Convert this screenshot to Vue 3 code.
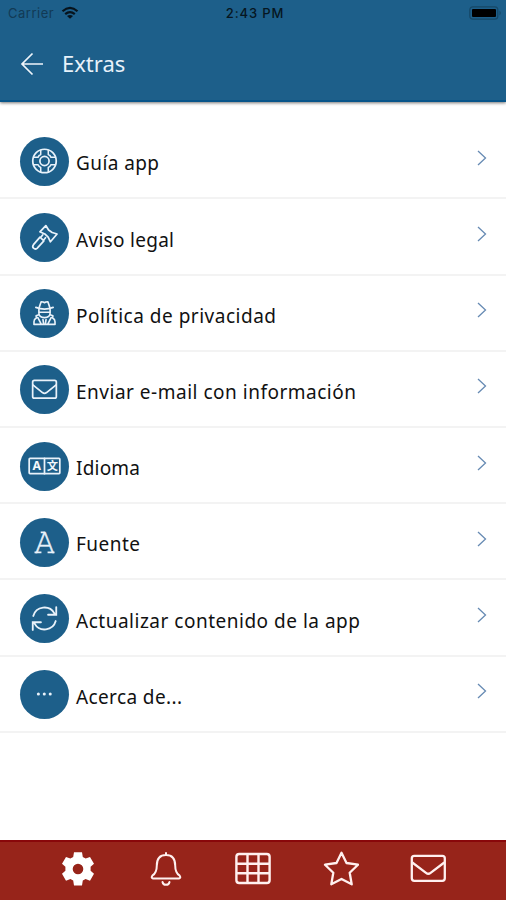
<script setup>
const rows = [
  { icon: 'guide', label: 'Guía app', width: 83 },
  { icon: 'gavel', label: 'Aviso legal', width: 98 },
  { icon: 'privacy', label: 'Política de privacidad', width: 200 },
  { icon: 'mail', label: 'Enviar e-mail con información', width: 280 },
  { icon: 'language', label: 'Idioma', width: 64 },
  { icon: 'font', label: 'Fuente', width: 64 },
  { icon: 'sync', label: 'Actualizar contenido de la app', width: 284 },
  { icon: 'more', label: 'Acerca de...', width: 106 },
]
</script>

<template>
  <div class="screen">
    <header class="header">
      <div class="status">
        <div class="carrier">
          <span>Carrier</span>
          <svg width="18" height="14" viewBox="0 0 18 14" fill="none" stroke="#07131c" stroke-width="2.200">
            <path d="M1.500 5.200Q9-1.600 16.500 5.200M4.200 8.200Q9 4 13.800 8.200" />
            <path d="M9 12.800 6 10Q9 7.800 12 10Z" fill="#07131c" stroke="none" />
          </svg>
        </div>
        <div class="time">2:43 PM</div>
        <div class="battery-wrap">
          <svg width="33" height="14" viewBox="0 0 33 14">
            <rect x=".8" y=".8" width="28" height="12.400" rx="3" fill="none" stroke="#164866" stroke-width="1.200" />
            <rect x="3" y="3" width="24" height="8" rx="1" fill="#000" />
            <path d="M30.500 4.500Q33 7 30.500 9.500Z" fill="#164866" />
          </svg>
        </div>
      </div>
      <div class="titlebar">
        <svg class="back" width="24" height="24" viewBox="0 0 24 24" fill="none" stroke="#eef5fb" stroke-width="1.700">
          <path d="M12.500 1.500 2 12l10.500 10.500M2 12H23" />
        </svg>
        <h1>Extras</h1>
      </div>
    </header>

    <main class="list">
      <div v-for="row in rows" :key="row.icon" class="row">
        <div class="badge">
          <svg width="48" height="48" viewBox="0 0 48 48" fill="none" stroke="#e9f2fa" stroke-width="1.700" stroke-linejoin="round" stroke-linecap="round">
            <g v-if="row.icon === 'guide'">
              <circle cx="24" cy="23.500" r="11.500" />
              <circle cx="24" cy="23.500" r="4.500" />
              <path stroke-width="1.500" d="M20.300 13v4.200q-2 .8-2.600 2.600h-4.200M27.700 13v4.200q2 .8 2.600 2.600h4.200M20.300 34v-4.200q-2-.8-2.600-2.600h-4.200M27.700 34v-4.200q2-.8 2.600-2.600h4.200" />
            </g>
            <g v-else-if="row.icon === 'gavel'">
              <path d="M25.300 12.300 28 16.600l3.500 2.500 4.800 1.500-6.500 7.600-2.200-4.500-3.300-3.200-4.800-2.100ZM22.200 21.500l-2 2.500M25 24.200l-2 2.500M19.600 23.700l3.800 3.600-6.700 7.300q-1.800 1.400-3.400-.1t-.1-3.500Z" />
            </g>
            <g v-else-if="row.icon === 'privacy'" stroke-width="1.600">
              <path d="M19 17.500 20.700 12.500l2 .3 1.300.7 1.300-.7 2-.3 1.700 5M15.500 18q8.500 3.300 17 0M18.500 20v3.500q0 4.500 5.500 4.500t5.500-4.500V20M19.500 22.800h9M17.800 25.500l-2 .7.200 2.300q-2.300 1.200-2.300 3.500v2.700h20.600V32q0-2.300-2.300-3.500l.2-2.300-2-.7M17.500 28l3.300 6.500M30.500 28l-3.300 6.500M22.500 30l.6 4M25.500 30l-.6 4" />
            </g>
            <g v-else-if="row.icon === 'mail'">
              <rect x="12.400" y="15" width="23.200" height="17.500" rx="1.700" />
              <path d="M12.600 19.500 22 27q2 1.500 4 0l9.400-7.500" />
            </g>
            <g v-else-if="row.icon === 'language'">
              <rect x="9" y="16" width="30" height="15" rx=".8" stroke-width="1.700" />
              <path d="M24 16v15" stroke-width="1.700" />
              <text class="letter" x="16.400" y="27.700" text-anchor="middle">A</text>
              <text class="hanzi" x="31.600" y="27.700" text-anchor="middle">文</text>
            </g>
            <g v-else-if="row.icon === 'font'">
              <text class="slab" x="24" y="33.800" text-anchor="middle">A</text>
              <path d="M14.200 33.600h6.800M27 33.600h6.800M20.300 14h4" stroke-width="1.700" stroke-linecap="butt" />
            </g>
            <g v-else-if="row.icon === 'sync'" stroke-width="1.800" stroke-linejoin="miter">
              <path d="M13 21.500A11.300 11.300 0 0 1 33.700 19M35 26.500A11.300 11.300 0 0 1 14.300 29M35.500 12.800v7.500h-8M12.500 35.200v-7.500h8" />
            </g>
            <g v-else fill="#e9f2fa" stroke="none">
              <circle cx="18" cy="23.500" r="1.500" />
              <circle cx="23.800" cy="23.500" r="1.500" />
              <circle cx="29.600" cy="23.500" r="1.500" />
            </g>
          </svg>
        </div>
        <svg class="label" height="30" :width="row.width + 4">
          <text x="0" y="21" :textLength="row.width">{{ row.label }}</text>
        </svg>
        <svg class="chevron" width="10" height="16" viewBox="0 0 10 16" fill="none" stroke="#668ab3" stroke-width="1.300">
          <path d="M1 1 8.500 8 1 15" />
        </svg>
      </div>
    </main>

    <nav class="tabs">
      <svg viewBox="0 0 36 36" fill="#fff">
        <path fill-rule="evenodd" d="M14 1.200h8l.8 4.800 2.800 1.600 4.400-1.700 4 6.900-3.400 3v4l3.400 3-4 6.900-4.400-1.700-2.800 1.600-.8 4.800h-8l-.8-4.800-2.800-1.600L6 29.700l-4-6.900 3.400-3v-4L2 12.800l4-6.900 4.400 1.700L13.200 6ZM18 12.700a5.300 5.300 0 1 0 0 10.600 5.300 5.300 0 1 0 0-10.600Z" />
      </svg>
      <svg viewBox="0 0 36 36" fill="none" stroke="#fff0ef" stroke-width="2" stroke-linecap="round" stroke-linejoin="round">
        <path d="M18 2v2M18 4q-9.200 0-9.200 10.500 0 7.500-4.500 10.200-1.500 2.300.7 2.800h26q2.200-.5.700-2.800-4.500-2.700-4.500-10.200Q27.200 4 18 4ZM14.500 31q.5 2.800 3.500 2.800t3.500-2.800" />
      </svg>
      <svg viewBox="0 0 36 36" fill="none" stroke="#fff0ef" stroke-width="2.400">
        <rect x="1.400" y="3" width="33.200" height="29" rx="2.800" />
        <path d="M12.500 3v29M23.500 3v29M1 12.700h34M1 22.300h34" />
      </svg>
      <svg viewBox="0 0 36 36" fill="none" stroke="#fff0ef" stroke-width="2.300" stroke-linejoin="round">
        <path d="m18.500 1.700 5 10.300 11.500 1.700-8.300 8.100 2 11.500-10.200-5.400-10.200 5.400 2-11.500L2 13.700 13.500 12Z" />
      </svg>
      <svg viewBox="0 0 36 36" fill="none" stroke="#fff0ef" stroke-width="2.300" stroke-linejoin="round">
        <rect x="1.800" y="4.800" width="33" height="25" rx="2.500" />
        <path d="m2.300 11.500 13.700 10.400q2.300 1.800 4.600 0l13.700-10.400" />
      </svg>
    </nav>
  </div>
</template>

<style>
body {
  margin: 0;
}
</style>

<style scoped>
.screen {
  display: flex;
  flex-direction: column;
  width: 506px;
  height: 900px;
  overflow: hidden;
  background: #fff;
  font-family: "Noto Sans", sans-serif;
}
.header {
  box-sizing: border-box;
  height: 102px;
  flex: none;
  background: #1d5f8a;
  border-bottom: 2px solid #08558a;
  box-shadow: 0 1px 3px rgba(0, 0, 0, .55);
}
.status {
  display: grid;
  grid-template-columns: 1fr auto 1fr;
  align-items: center;
  height: 26px;
  padding: 0 4px 0 8px;
  font-family: Inter, sans-serif;
}
.carrier {
  display: flex;
  align-items: center;
  gap: 7px;
  color: #123a55;
  font-size: 13px;
  letter-spacing: .500px;
}
.time {
  color: #061621;
  font-size: 13px;
  font-weight: 500;
  letter-spacing: .850px;
}
.battery-wrap {
  display: flex;
  justify-content: flex-end;
}
.titlebar {
  display: flex;
  align-items: center;
  gap: 18px;
  height: 76px;
  padding-left: 20px;
}
h1 {
  margin: 0 0 3px;
  color: #e8f2fa;
  font-size: 22px;
  font-weight: 400;
  line-height: 30px;
}
.list {
  flex: 1;
  padding-top: 21.300px;
}
.row {
  box-sizing: border-box;
  display: flex;
  align-items: center;
  height: 76.200px;
  padding: 2px 19px 0 20px;
  border-bottom: 2px solid #f3f3f3;
}
.badge {
  width: 49px;
  height: 49px;
  flex: none;
  border-radius: 50%;
  background: #1d5f8a;
}
.badge svg {
  display: block;
  width: 49px;
  height: 49px;
}
.label {
  display: block;
  margin: 6px 0 0 6.500px;
  fill: #111;
  font-size: 19px;
  overflow: visible;
}
.chevron {
  margin: 0 0 7px auto;
}
.letter,
.hanzi {
  fill: #f3f8fc;
  stroke: none;
  font-family: "Noto Sans", sans-serif;
  font-size: 12px;
  font-weight: 700;
}
.hanzi {
  font-family: "Noto Sans CJK SC", sans-serif;
  font-size: 11px;
}
.slab {
  fill: #e9f2fa;
  stroke: #e9f2fa;
  stroke-width: .500px;
  font-family: Lato, sans-serif;
  font-weight: 300;
  font-size: 28px;
}
.tabs {
  box-sizing: border-box;
  display: flex;
  justify-content: center;
  gap: 51.500px;
  height: 60px;
  flex: none;
  padding-top: 8.500px;
  background: #97241a;
  border-top: 2px solid #89070a;
}
.tabs svg {
  width: 36px;
  height: 36px;
}
</style>
